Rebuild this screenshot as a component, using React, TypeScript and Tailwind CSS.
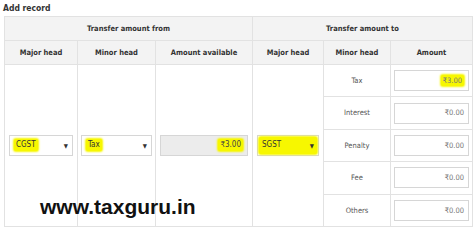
import React from "react";

const font = { fontFamily: '"DejaVu Sans Condensed", "DejaVu Sans", sans-serif' };

const Hl = ({ children }: { children: React.ReactNode }) => (
  <span className="rounded-[2px] bg-[#f7f700] px-[2px] shadow-[0_0_2px_1px_#f7f700]">{children}</span>
);

const Select = ({ value, width }: { value: string; width: string }) => (
  <div
    className={`flex h-[21px] ${width} items-center justify-between border border-[#d6d6d6] bg-white pl-[4px] pr-[4px] text-[8px] text-[#333]`}
  >
    <Hl>{value}</Hl>
    <span className="text-[6px] text-[#333]">▼</span>
  </div>
);

const rows = [
  { label: "Tax", amount: "₹3.00", hl: true },
  { label: "Interest", amount: "₹0.00" },
  { label: "Penalty", amount: "₹0.00" },
  { label: "Fee", amount: "₹0.00" },
  { label: "Others", amount: "₹0.00" },
];

export default function App() {
  return (
    <div className="relative h-[233px] w-[474px] overflow-hidden bg-white" style={font}>
      <div className="pl-[3px] pt-[2px] text-[8.5px] font-bold leading-[12px] text-[#333]">Add record</div>
      <table className="ml-[4px] mt-[2px] table-fixed border-collapse text-[8px] text-[#444]">
        <colgroup>
          <col className="w-[73px]" />
          <col className="w-[78px]" />
          <col className="w-[96px]" />
          <col className="w-[71px]" />
          <col className="w-[67px]" />
          <col className="w-[82px]" />
        </colgroup>
        <thead>
          <tr className="h-[24px] bg-[#f3f3f3] text-[7.5px] text-[#333]">
            <th colSpan={3} className="border border-[#e2e2e2] font-bold">
              Transfer amount from
            </th>
            <th colSpan={3} className="border border-[#e2e2e2] font-bold">
              Transfer amount to
            </th>
          </tr>
          <tr className="h-[24px] bg-[#f3f3f3] text-[7.5px] text-[#333]">
            <th className="border border-[#e2e2e2] font-bold">Major head</th>
            <th className="border border-[#e2e2e2] font-bold">Minor head</th>
            <th className="border border-[#e2e2e2] font-bold">Amount available</th>
            <th className="border border-[#e2e2e2] font-bold">Major head</th>
            <th className="border border-[#e2e2e2] font-bold">Minor head</th>
            <th className="border border-[#e2e2e2] font-bold">Amount</th>
          </tr>
        </thead>
        <tbody>
          {rows.map((r, i) => (
            <tr key={r.label} className="h-[32.4px]">
              {i === 0 && (
                <>
                  <td rowSpan={5} className="border border-[#e2e2e2] px-[4px]">
                    <Select value="CGST" width="w-[64px]" />
                  </td>
                  <td rowSpan={5} className="border border-[#e2e2e2] px-[3px]">
                    <Select value="Tax" width="w-[71px]" />
                  </td>
                  <td rowSpan={5} className="border border-[#e2e2e2] px-[4px]">
                    <div className="flex h-[21px] w-[88px] items-center justify-end border border-[#d6d6d6] bg-[#ececec] pr-[4px] text-[8px] text-[#444]">
                      <Hl>₹3.00</Hl>
                    </div>
                  </td>
                  <td rowSpan={5} className="border border-[#e2e2e2] px-[4px]">
                    <div className="flex h-[21px] w-[62px] items-center border border-[#d6d6d6] bg-white text-[8px] text-[#333]">
                      <div className="ml-[1px] flex h-[17px] w-[58px] items-center justify-between rounded-[2px] bg-[#f7f700] px-[3px] shadow-[0_0_2px_1px_#f7f700]">
                        <span>SGST</span>
                        <span className="text-[6px]">▼</span>
                      </div>
                    </div>
                  </td>
                </>
              )}
              <td className="border border-[#e2e2e2] text-center text-[7.5px] text-[#555]">{r.label}</td>
              <td className="border border-[#e2e2e2] px-[3px]">
                <div className="flex h-[21px] w-[75px] items-center justify-end border border-[#d6d6d6] bg-white pr-[4px] text-[7.5px] text-[#777]">
                  {r.hl ? <Hl>{r.amount}</Hl> : r.amount}
                </div>
              </td>
            </tr>
          ))}
        </tbody>
      </table>
      <div
        className="absolute left-[40px] top-[195px] text-[21px] font-bold leading-[24px] text-[#111]"
        style={{ fontFamily: '"Liberation Sans", Arial, sans-serif' }}
      >
        www.taxguru.in
      </div>
    </div>
  );
}
